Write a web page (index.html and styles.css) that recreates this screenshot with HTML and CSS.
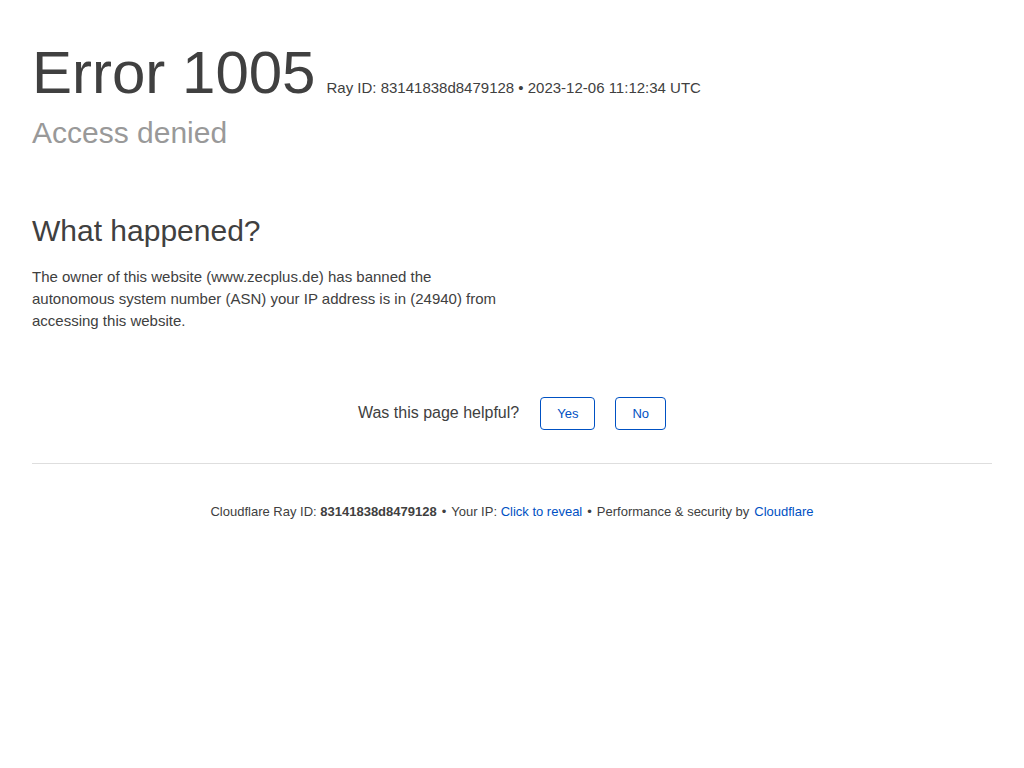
FILE: index.html
```html
<!DOCTYPE html>
<html lang="en">
<head>
<meta charset="utf-8">
<title>Access denied | www.zecplus.de used Cloudflare to restrict access</title>
<link rel="stylesheet" href="styles.css">
</head>
<body>
<div class="wrapper">
  <header class="error-header">
    <h1 class="title"><span>Error</span> <span>1005</span><small class="ray">Ray ID: 83141838d8479128 &bull; 2023-12-06 11:12:34 UTC</small></h1>
    <h2 class="subtitle">Access denied</h2>
  </header>
  <section class="details">
    <div class="column">
      <h2 class="section-title">What happened?</h2>
      <p class="text">The owner of this website (www.zecplus.de) has banned the autonomous system number (ASN) your IP address is in (24940) from accessing this website.</p>
    </div>
  </section>
  <div class="feedback">
    <span class="question">Was this page helpful?</span>
    <button class="btn btn-yes" type="button">Yes</button>
    <button class="btn" type="button">No</button>
  </div>
  <footer class="footer">
    <span>Cloudflare Ray ID: <strong>83141838d8479128</strong></span>
    <span class="sep">&bull;</span>
    <span>Your IP: <a class="link" href="#">Click to reveal</a></span>
    <span class="sep">&bull;</span>
    <span>Performance &amp; security by</span>
    <a class="link" href="#">Cloudflare</a>
  </footer>
</div>
</body>
</html>
```
FILE: styles.css
```css
* { box-sizing: border-box; }
html, body { margin: 0; padding: 0; background: #fff; }
body {
  font-family: "Liberation Sans", Arial, Helvetica, sans-serif;
  color: #404040;
  font-size: 15px;
  line-height: 1.5;
}
.wrapper {
  width: 960px;
  margin: 0 auto;
  padding-top: 37px;
}
.title {
  margin: 0;
  font-size: 60px;
  font-weight: 400;
  line-height: 72px;
  color: #404040;
}
.ray {
  font-size: 15px;
  margin-left: 11px;
  color: #404040;
}
.subtitle {
  margin: -13px 0 0;
  font-size: 30px;
  font-weight: 400;
  line-height: 44px;
  color: #999;
}
.details {
  margin-top: 56px;
}
.column {
  width: 480px;
}
.section-title {
  margin: 0;
  font-size: 30px;
  font-weight: 400;
  line-height: 40px;
  color: #404040;
}
.text {
  margin: 15px 0 0;
  font-size: 15px;
  line-height: 22px;
}
.feedback {
  margin-top: 64px;
  display: flex;
  justify-content: center;
  align-items: center;
  padding-bottom: 33px;
  border-bottom: 1px solid #dedede;
}
.question {
  font-size: 16px;
  margin-right: 21px;
  margin-top: -1px;
}
.btn {
  font-family: inherit;
  font-size: 13px;
  color: #0051c3;
  background: #fff;
  border: 1px solid #0051c3;
  border-radius: 4px;
  height: 33px;
  padding: 0 16px;
  margin-top: 1px;
  cursor: pointer;
}
.btn-yes { margin-right: 20px; }
.footer {
  display: flex;
  justify-content: center;
  align-items: baseline;
  gap: 5px;
  font-size: 13px;
  padding-top: 38px;
  color: #404040;
}
.footer strong { font-weight: 700; }
.link { color: #0051c3; text-decoration: none; }
.sep { color: #404040; }
```
